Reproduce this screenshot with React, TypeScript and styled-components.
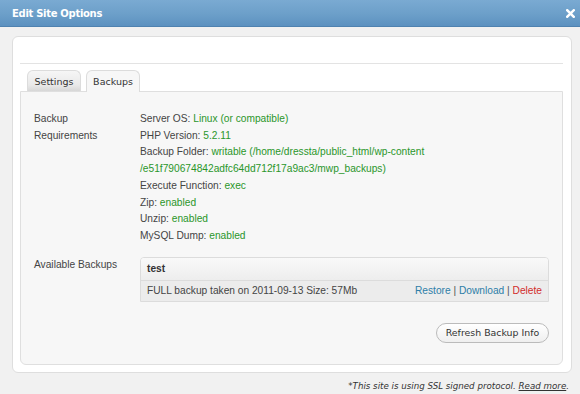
import React from 'react';
import styled, { createGlobalStyle } from 'styled-components';

const Global = createGlobalStyle`
body {
  margin: 0;
  background: #f1f1f1;
  font-family: "Liberation Sans", Arial, sans-serif;
}
`;

const requirements = [
  { label: 'Server OS:', value: 'Linux (or compatible)' },
  { label: 'PHP Version:', value: '5.2.11' },
  {
    label: 'Backup Folder:',
    value: 'writable (/home/dressta/public_html/wp-content',
    more: '/e51f790674842adfc64dd712f17a9ac3/mwp_backups)',
  },
  { label: 'Execute Function:', value: 'exec' },
  { label: 'Zip:', value: 'enabled' },
  { label: 'Unzip:', value: 'enabled' },
  { label: 'MySQL Dump:', value: 'enabled' },
];

const CloseIcon = () => (
  <svg width="9" height="9" viewBox="0 0 9 9">
    <path d="M1.2 1.2 L7.8 7.8 M7.8 1.2 L1.2 7.8" stroke="#fff" strokeWidth="2.4" strokeLinecap="square" />
  </svg>
);

const App = () => {
  return (
    <>
      <Global />
      <TitleBar>
        <Title>Edit Site Options</Title>
        <Close>
          <CloseIcon />
        </Close>
      </TitleBar>
      <Card>
        <TopArea />
        <Tabs>
          <Tab>Settings</Tab>
          <Tab active>Backups</Tab>
        </Tabs>
        <Panel>
          <Row>
            <Label>
              Backup
              <br />
              Requirements
            </Label>
            <Values>
              {requirements.map((r) => (
                <div key={r.label}>
                  {r.label} <Ok>{r.value}</Ok>
                  {r.more && (
                    <>
                      <br />
                      <Ok>{r.more}</Ok>
                    </>
                  )}
                </div>
              ))}
            </Values>
          </Row>
          <Row gap>
            <Label>Available Backups</Label>
            <BackupBox>
              <BackupHead>test</BackupHead>
              <BackupRow>
                <span>FULL backup taken on 2011-09-13 Size: 57Mb</span>
                <Actions>
                  <Link>Restore</Link> | <Link>Download</Link> | <Link danger>Delete</Link>
                </Actions>
              </BackupRow>
            </BackupBox>
          </Row>
          <ButtonRow>
            <Button>Refresh Backup Info</Button>
          </ButtonRow>
        </Panel>
      </Card>
      <Footnote>
        *This site is using SSL signed protocol. <u>Read more</u>.
      </Footnote>
    </>
  );
};

export default App;

const TitleBar = styled.div`
height: 27px;
display: flex;
align-items: center;
justify-content: space-between;
padding: 0 5px 0 12px;
background: linear-gradient(to bottom, #7aaad2 0%, #6c9fc9 55%, #5c91c0 100%);
border-bottom: 1px solid #4f82b0;
box-sizing: border-box;
`;

const Title = styled.div`
color: #fff;
font-family: "DejaVu Sans", Verdana, sans-serif;
font-weight: bold;
font-size: 10px;
letter-spacing: -0.3px;
`;

const Close = styled.div`
display: flex;
align-items: center;
width: 9px;
height: 9px;
`;

const Card = styled.div`
margin: 9px 8px 0 12px;
height: 337px;
box-sizing: border-box;
background: #fff;
border: 1px solid #dedede;
border-radius: 6px;
padding: 0 8px 0 7px;
display: flex;
flex-direction: column;
`;

const TopArea = styled.div`
height: 26px;
border-bottom: 1px solid #e3e3e3;
`;

const Tabs = styled.div`
display: flex;
gap: 5px;
margin-top: 5px;
padding-left: 7px;
height: 22px;
align-items: flex-end;
`;

const Tab = styled.div<{ active?: boolean }>`
width: 54px;
height: ${(p) => (p.active ? 22 : 21)}px;
box-sizing: border-box;
display: flex;
align-items: center;
justify-content: center;
font-family: "DejaVu Sans", Verdana, sans-serif;
font-size: 9.5px;
color: #333;
border: 1px solid #dcdcdc;
border-bottom: none;
border-radius: 6px 6px 0 0;
background: ${(p) =>
  p.active ? '#f7f7f7' : 'linear-gradient(to bottom, #f6f6f6 0%, #e9e9e9 70%, #d7d7d7 100%)'};
margin-bottom: ${(p) => (p.active ? -1 : 0)}px;
position: relative;
z-index: 1;
`;

const Panel = styled.div`
height: 274px;
box-sizing: border-box;
background: #f7f7f7;
border: 1px solid #dfdfdf;
border-radius: 0 0 6px 6px;
padding: 19px 13px 0 13px;
font-family: "Liberation Sans", Arial, sans-serif;
font-size: 10.2px;
color: #444;
`;

const Row = styled.div<{ gap?: boolean }>`
display: flex;
margin-top: ${(p) => (p.gap ? 12 : 0)}px;
`;

const Label = styled.div`
width: 106px;
flex-shrink: 0;
line-height: 16.7px;
`;

const Values = styled.div`
line-height: 16.7px;
`;

const Ok = styled.span`
color: #2a962a;
`;

const BackupBox = styled.div`
width: 409px;
border: 1px solid #dcdcdc;
border-radius: 4px 4px 0 0;
overflow: hidden;
`;

const BackupHead = styled.div`
height: 22px;
display: flex;
align-items: center;
padding-left: 6px;
font-weight: bold;
color: #333;
background: linear-gradient(to bottom, #f9f9f9, #ededed);
border-bottom: 1px solid #dcdcdc;
`;

const BackupRow = styled.div`
height: 20px;
display: flex;
align-items: center;
justify-content: space-between;
padding: 0 6px;
background: #ececec;
color: #444;
`;

const Actions = styled.span`
color: #555;
`;

const Link = styled.span<{ danger?: boolean }>`
color: ${(p) => (p.danger ? '#d22b2b' : '#2e7ea8')};
`;

const ButtonRow = styled.div`
display: flex;
justify-content: flex-end;
margin-top: 21px;
`;

const Button = styled.div`
width: 113px;
height: 20px;
box-sizing: border-box;
display: flex;
align-items: center;
justify-content: center;
border: 1px solid #bbb;
border-radius: 11px;
background: linear-gradient(to bottom, #ffffff, #efefef);
font-family: "DejaVu Sans", Verdana, sans-serif;
font-size: 9.4px;
color: #333;
`;

const Footnote = styled.div`
text-align: right;
padding: 8px 11px 0 0;
font-family: "DejaVu Sans", Verdana, sans-serif;
font-style: italic;
font-size: 8.7px;
color: #333;
`;
